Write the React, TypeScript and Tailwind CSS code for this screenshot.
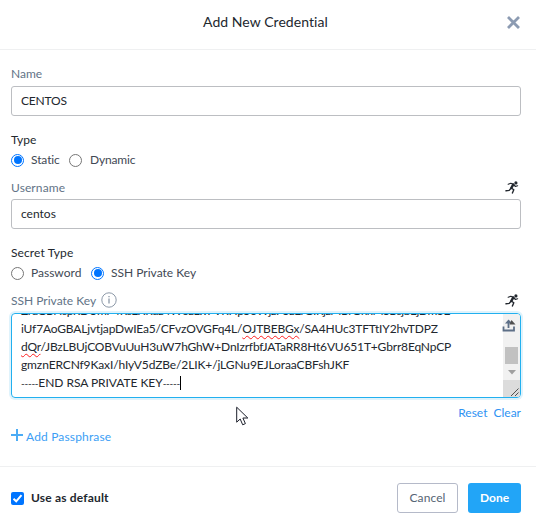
import type { ReactNode } from "react";

function Radio({ checked = false }: { checked?: boolean }) {
  return (
    <span
      className={
        checked
          ? "flex size-[13px] shrink-0 items-center justify-center rounded-full border border-[#0075ff] bg-white"
          : "size-[13px] shrink-0 rounded-full border border-[#767676] bg-white"
      }
    >
      {checked && <span className="size-[8px] rounded-full bg-[#0075ff]" />}
    </span>
  );
}

function Runner() {
  return (
    <svg className="h-[13px] w-[14px]" viewBox="0 0 14 13" fill="none" stroke="#22272e" strokeLinecap="round" strokeLinejoin="round">
      <circle cx="10.9" cy="1.9" r="1.6" fill="#22272e" stroke="none" />
      <path d="M3.2 3.2L5.8 2.3L8.6 3.4L10.4 5.5L12.6 4.8" strokeWidth="1.2" />
      <path d="M8.2 3.6L6.3 7" strokeWidth="2.5" />
      <path d="M6 7.2L4.2 9.4L1 9.8M6.6 7.2L8.8 8.8L7.4 12" strokeWidth="1.4" />
    </svg>
  );
}

function Input({ children }: { children: ReactNode }) {
  return (
    <div className="flex h-[30px] items-center rounded-[3px] border border-[#bcbec2] px-[9px] text-[#22272e]">{children}</div>
  );
}

function Misspelt({ children }: { children: ReactNode }) {
  return (
    <span className="underline decoration-[#ff2020] decoration-wavy decoration-1 underline-offset-[2px] [text-decoration-skip-ink:none]">
      {children}
    </span>
  );
}

export default function App() {
  return (
    <div className="relative flex h-[520px] w-[536px] flex-col overflow-hidden bg-white font-['Lato',sans-serif] text-[12px] leading-[16px] text-[#22272e]">
      <header className="flex h-[50px] items-center border-b border-[#eff0f1] pr-[16px] pl-[203px]">
        <h1 className="-mt-[5px] grow text-[14px] tracking-[0.06px] whitespace-nowrap">Add New Credential</h1>
        <svg className="-mt-[4px] size-[13px]" viewBox="0 0 13 13" stroke="#8c9bb2" strokeWidth="2.8">
          <path d="M1 1L12 12M12 1L1 12" />
        </svg>
      </header>

      <main className="flex h-[416px] flex-col pr-[15px] pl-[11px]">
        <div className="mt-[16px] h-[20px] text-[#627386]">Name</div>
        <Input><span className="tracking-[-0.2px]">CENTOS</span></Input>

        <div className="mt-[16px] h-[20px]">Type</div>
        <div className="flex h-[16px] items-center text-[#3f4954]">
          <Radio checked />
          <span className="ml-[7px] w-[38px] tracking-[-0.1px]">Static</span>
          <Radio />
          <span className="ml-[8px] tracking-[-0.15px]">Dynamic</span>
        </div>

        <div className="mt-[12px] flex h-[19px] justify-between text-[#627386]">
          <span className="tracking-[0.1px]">Username</span>
          <span className="mt-[1px] mr-[2px]"><Runner /></span>
        </div>
        <Input><span>centos</span></Input>

        <div className="mt-[16px] h-[20px] tracking-[0.1px]">Secret Type</div>
        <div className="flex h-[16px] items-center text-[#3f4954]">
          <Radio />
          <span className="ml-[7px] w-[60px]">Password</span>
          <Radio checked />
          <span className="ml-[7px]">SSH Private Key</span>
        </div>

        <div className="mt-[12px] flex h-[20px] text-[#627386]">
          <span className="w-[90px] whitespace-nowrap">SSH Private Key</span>
          <svg className="-mt-[1px] size-[16px]" viewBox="0 0 16 16" fill="none" stroke="#8d99a8">
            <circle cx="8" cy="8" r="7.2" />
            <path d="M8 6.5V11.5M8 4V5.3" strokeWidth="1.3" />
          </svg>
          <span className="mt-[1px] mr-[2px] ml-auto"><Runner /></span>
        </div>

        <div className="flex h-[85px] shrink-0 overflow-hidden rounded-[4px] border border-[#22b0ef] shadow-[0_0_0_2px_#dff3fc]">
          <div className="flex h-[83px] w-[491px] shrink-0 flex-col justify-end overflow-hidden pb-[5px] pl-[9px] leading-[18px] whitespace-nowrap">
            <div className="tracking-[-0.4px]">ZrdGBNspRDUmP4RsEXRdz4W6zLwFVRHp56WjzP5zErGIRjzMBrOxkMSBsjbEjDm3E</div>
            <div className="tracking-[-0.17px]">iUf7AoGBALjvtjapDwIEa5/CFvzOVGFq4L/<Misspelt>OJTBEBGx</Misspelt>/SA4HUc3TFTtIY2hvTDPZ</div>
            <div className="tracking-[-0.17px]"><Misspelt>dQr</Misspelt>/JBzLBUjCOBVuUuH3uW7hGhW+DnIzrfbfJATaRR8Ht6VU651T+Gbrr8EqNpCP</div>
            <div className="tracking-[-0.12px]">gmznERCNf9KaxI/hIyV5dZBe/2LIK+/jLGNu9EJLoraaCBFshJKF</div>
            <div className="flex items-center">
              <span className="text-[10px] tracking-[-0.25px]">-----</span>
              <span className="tracking-[-0.05px]">END RSA PRIVATE KEY</span>
              <span className="text-[10px] tracking-[-0.25px]">-----</span>
              <span className="h-[14px] w-px bg-black" />
            </div>
          </div>
          <div className="flex w-[17px] shrink-0 flex-col items-center bg-[#f1f1f1]">
            <svg className="mt-[5px] -ml-[5px] h-[13px] w-[14px]" viewBox="0 0 14 13">
              <path d="M1.5 7.5V11.5H12V7.5M6.5 9V3" fill="none" stroke="#5d6f87" strokeWidth="1.8" />
              <path d="M3 4.5L6.5 0.5L9 3V4.5Z" fill="#5d6f87" />
              <path d="M9.5 1L13.5 5.5H7.5Z" fill="#505050" />
            </svg>
            <div className="mt-[15px] h-[17px] w-[13px] bg-[#c1c1c1]" />
            <svg className="mt-[6px] h-[5px] w-[8px]" viewBox="0 0 8 5"><path d="M0 0H8L4 4.5Z" fill="#a0a0a0" /></svg>
            <svg className="mt-auto h-[17px] w-[17px] bg-[#dcdcdc]" viewBox="0 0 17 17" stroke="#505050">
              <path d="M8 16L15.5 8.5M12 16L15.5 12.5" />
            </svg>
          </div>
        </div>

        <div className="mt-[7px] flex h-[16px] justify-end gap-[6px] text-[#2f93f3]">
          <span>Reset</span>
          <span>Clear</span>
        </div>
        <div className="mt-[8px] flex h-[16px] items-center gap-[3px] text-[#3b9ef5]">
          <svg className="-mt-[4px] size-[12px]" viewBox="0 0 12 12" stroke="#4cacf5" strokeWidth="2"><path d="M6 0V12M0 6H12" /></svg>
          <span className="tracking-[0.16px]">Add Passphrase</span>
        </div>
      </main>

      <footer className="flex h-[54px] items-center border-t border-[#eff0f1] pr-[15px] pl-[11px]">
        <svg className="mt-[10px] size-[13px] rounded-[2px] bg-[#0075ff]" viewBox="0 0 13 13" fill="none" stroke="white" strokeWidth="2">
          <path d="M2.5 6.8L5.2 9.3L10.5 3.2" />
        </svg>
        <span className="mt-[9px] ml-[7px] grow font-bold tracking-[0.18px]">Use as default</span>
        <button className="mt-[9px] h-[30px] w-[61px] rounded-[3px] border border-[#b5bac9] text-[12px] tracking-[0.1px] text-[#566474]">Cancel</button>
        <button className="mt-[9px] ml-[10px] h-[30px] w-[53px] rounded-[3px] bg-[#22a5f7] text-[12px] font-bold text-white">Done</button>
      </footer>

      <svg className="absolute top-[406px] left-[236px] h-[21px] w-[13px]" viewBox="0 0 13 21">
        <path d="M.7 1.2V16.2L4.2 13L6.7 18.8L9.4 17.6L6.9 12H11.8Z" fill="white" stroke="#1c1f2b" />
      </svg>
    </div>
  );
}
